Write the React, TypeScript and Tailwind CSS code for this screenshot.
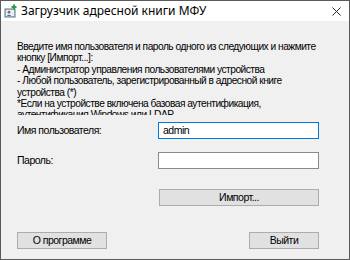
import React from "react";

function AppIcon() {
  return (
    <svg width="14" height="14" viewBox="0 0 14 14">
      <rect x="1" y="5" width="10" height="8" fill="#c8d7ea" stroke="#5b6f8c" strokeWidth="1" />
      <rect x="2" y="6" width="8" height="6" fill="#e9eef5" />
      <circle cx="5" cy="8.2" r="1.4" fill="#8a6a4a" />
      <path d="M2.8 12 Q5 9.5 7.2 12 Z" fill="#3d6fb0" />
      <path d="M10 0.5 v5 M7.5 3 h5" stroke="#2e9e3a" strokeWidth="2" />
    </svg>
  );
}

export default function App() {
  const lines = [
    "Введите имя пользователя и пароль одного из следующих и нажмите",
    "кнопку [Импорт...]:",
    "- Администратор управления пользователями устройства",
    "- Любой пользователь, зарегистрированный в адресной книге",
    "устройства (*)",
    "*Если на устройстве включена базовая аутентификация,",
    "аутентификация Windows или LDAP.",
  ];
  return (
    <div className="w-[350px] h-[260px] border border-[#5a5a5a] bg-[#f0f0f0] flex flex-col overflow-hidden font-['Liberation_Sans',sans-serif] text-black">
      <div className="h-[20px] bg-white flex items-center pl-[3px] shrink-0">
        <AppIcon />
        <span className="ml-[3px] text-[12px] leading-none font-['Noto_Sans',sans-serif]">Загрузчик адресной книги МФУ</span>
        <span className="ml-auto mr-[8px]">
          <svg width="9" height="9" viewBox="0 0 9 9">
            <path d="M0.5 0.5 L8.5 8.5 M8.5 0.5 L0.5 8.5" stroke="#222" strokeWidth="1" />
          </svg>
        </span>
      </div>
      <div className="flex-1 flex flex-col pl-[16px] pr-[30px] pt-[20px] text-[10px] tracking-[-0.5px]">
        <div className="h-[74px] overflow-hidden leading-[11.4px] text-[10.2px]">
          {lines.map((l, i) => (
            <div key={i} className="whitespace-nowrap">{l}</div>
          ))}
        </div>
        <div className="mt-[7px] flex items-center justify-between text-[10.5px]">
          <span>Имя пользователя:</span>
          <div className="w-[161px] h-[17px] border border-[#0078d7] bg-white flex items-center pl-[4px]">admin</div>
        </div>
        <div className="mt-[13px] flex items-center justify-between text-[10.5px]">
          <span>Пароль:</span>
          <div className="w-[161px] h-[17px] border border-[#8a8a8a] bg-white"></div>
        </div>
        <div className="mt-[20px] flex justify-end text-[10.5px]">
          <button className="w-[160px] h-[17px] border border-[#adadad] bg-[#e1e1e1] flex items-center justify-center">Импорт...</button>
        </div>
        <div className="mt-[26px] flex justify-between text-[10.5px]">
          <button className="w-[90px] h-[17px] border border-[#adadad] bg-[#e1e1e1] flex items-center justify-center">О программе</button>
          <button className="w-[70px] h-[17px] border border-[#adadad] bg-[#e1e1e1] flex items-center justify-center">Выйти</button>
        </div>
      </div>
    </div>
  );
}
